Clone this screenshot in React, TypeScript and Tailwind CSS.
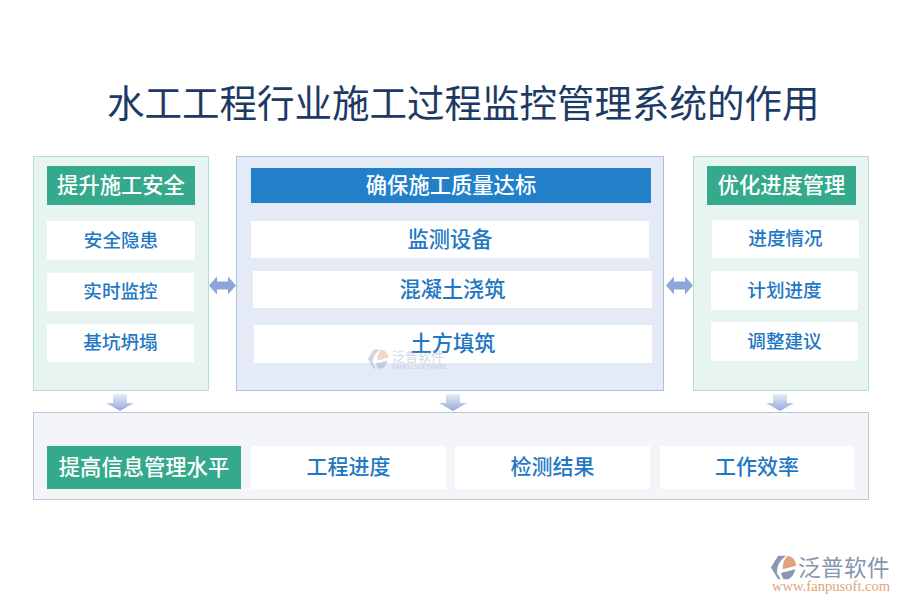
const font = { fontFamily: '"Noto Sans CJK SC", sans-serif' };

function DoubleArrow() {
  return (
    <svg width="27" height="19" viewBox="0 0 27 19" className="block">
      <path d="M0 9.5 L8 0.5 V5.5 H19 V0.5 L27 9.5 L19 18.5 V13.5 H8 V18.5 Z" fill="#8ca6d9" />
    </svg>
  );
}

function DownArrow({ id }: { id: string }) {
  return (
    <svg width="28" height="17" viewBox="0 0 28 17" className="block">
      <defs>
        <linearGradient id={id} x1="0" y1="0" x2="0" y2="1">
          <stop offset="0" stopColor="#e6ebf6" />
          <stop offset="1" stopColor="#93a9dc" />
        </linearGradient>
      </defs>
      <path d="M7 0 H21 V9 H28 L14 17 L0 9 H7 Z" fill={`url(#${id})`} />
    </svg>
  );
}

function Cell({ text, className }: { text: string; className: string }) {
  return (
    <div className={`flex items-center justify-center bg-white text-[#1f78c4] font-medium pb-[4px] ${className}`}>
      {text}
    </div>
  );
}

function LogoMark({ size, a, b }: { size: number; a: string; b: string }) {
  return (
    <svg width={size} height={size} viewBox="0 0 30 30" className="block shrink-0">
      <path d="M9 2 H18 C11 7 7 14 8 22 L12 28 H9 L1 15 Z" fill={a} />
      <path d="M20 2 C25 3 29 8 29 13 L14 17 C14 10 16 5 20 2 Z" fill={b} />
      <path d="M12 21 L28 17 C27 22 24 27 20 28 H15 Z" fill={a} />
    </svg>
  );
}

export default function App() {
  return (
    <div className="relative w-[900px] h-[600px] bg-white overflow-hidden" style={font}>
      <div className="pt-[76px] pl-[107px] h-[156px]">
        <h1 className="text-[37.5px] leading-[50px] font-normal text-[#1d3a66] whitespace-nowrap">
          水工工程行业施工过程监控管理系统的作用
        </h1>
      </div>

      <div className="flex ml-[33px] w-[836px] h-[235px]">
        <div className="w-[176px] h-full bg-[#e8f4f1] border border-[#b3e0d2] pt-[9px] pl-[13px]">
          <div className="flex items-center justify-center w-[148px] h-[39px] pb-[4px] bg-[#35a98b] text-white text-[21.3px] font-medium">
            提升施工安全
          </div>
          <Cell text="安全隐患" className="w-[148px] h-[39px] mt-[16px] text-[18.6px]" />
          <Cell text="实时监控" className="w-[147px] h-[38px] mt-[13px] text-[18.6px]" />
          <Cell text="基坑坍塌" className="w-[147px] h-[38px] mt-[13px] text-[18.6px]" />
        </div>

        <div className="flex items-center w-[27px] pt-[24px]">
          <DoubleArrow />
        </div>

        <div className="w-[428px] h-full bg-[#e5ebf6] border border-[#adc1e5] pt-[11px] pl-[14px]">
          <div className="flex items-center justify-center w-[400px] h-[35px] pb-[4px] bg-[#2180c9] text-white text-[21.3px] font-medium">
            确保施工质量达标
          </div>
          <Cell text="监测设备" className="w-[398px] h-[37px] mt-[18px] text-[21.2px]" />
          <Cell text="混凝土浇筑" className="w-[399px] h-[37px] mt-[13px] ml-[2px] text-[21.2px]" />
          <Cell text="土方填筑" className="w-[398px] h-[38px] mt-[17px] ml-[3px] text-[21.2px]" />
        </div>

        <div className="flex items-center w-[29px] pl-[2px] pt-[24px]">
          <DoubleArrow />
        </div>

        <div className="w-[176px] h-full bg-[#e8f4f1] border border-[#b3e0d2] pt-[9px] pl-[13px]">
          <div className="flex items-center justify-center w-[149px] h-[39px] pb-[4px] bg-[#35a98b] text-white text-[21.3px] font-medium">
            优化进度管理
          </div>
          <Cell text="进度情况" className="w-[147px] h-[38px] mt-[15px] ml-[5px] text-[18.6px]" />
          <Cell text="计划进度" className="w-[147px] h-[39px] mt-[13px] ml-[4px] text-[18.6px]" />
          <Cell text="调整建议" className="w-[147px] h-[39px] mt-[12px] ml-[4px] text-[18.6px]" />
        </div>
      </div>

      <div className="flex items-start h-[21px] pt-[3px] pl-[106px]">
        <DownArrow id="d1" />
        <div className="w-[305px] shrink-0" />
        <DownArrow id="d2" />
        <div className="w-[299px] shrink-0" />
        <DownArrow id="d3" />
      </div>

      <div className="flex ml-[33px] w-[836px] h-[88px] bg-[#f3f5f8] border border-[#bcc4d8] pt-[33px] pl-[13px]">
        <div className="flex items-center justify-center w-[194px] h-[43px] pb-[4px] bg-[#35a98b] text-white text-[21.3px] font-medium">
          提高信息管理水平
        </div>
        <Cell text="工程进度" className="w-[195px] h-[43px] ml-[10px] text-[21px]" />
        <Cell text="检测结果" className="w-[195px] h-[43px] ml-[9px] text-[21px]" />
        <Cell text="工作效率" className="w-[194px] h-[43px] ml-[10px] text-[21px]" />
      </div>

      <div className="absolute left-[367px] top-[348px] flex items-center gap-[3px] opacity-40">
        <LogoMark size={22} a="#8f9db5" b="#e59a6c" />
        <div className="flex flex-col">
          <span className="text-[13px] leading-[15px] text-[#8f9db5]">泛普软件</span>
          <span className="text-[6.4px] leading-[7px] text-[#8f9db5] whitespace-nowrap">FANPU SOFTWARE</span>
        </div>
      </div>

      <div className="absolute left-[770px] top-[554px] flex items-start gap-[1px]">
        <LogoMark size={27} a="#8a97b0" b="#e3a27c" />
        <span className="text-[22.5px] leading-[25px] tracking-[0.5px] text-[#8795ad] whitespace-nowrap">泛普软件</span>
      </div>
      <div
        className="absolute left-[772px] top-[581px] text-[14.6px] leading-[10px] text-[#e3a27c] whitespace-nowrap"
        style={{ fontFamily: '"Liberation Serif", serif' }}
      >
        www.fanpusoft.com
      </div>
    </div>
  );
}
